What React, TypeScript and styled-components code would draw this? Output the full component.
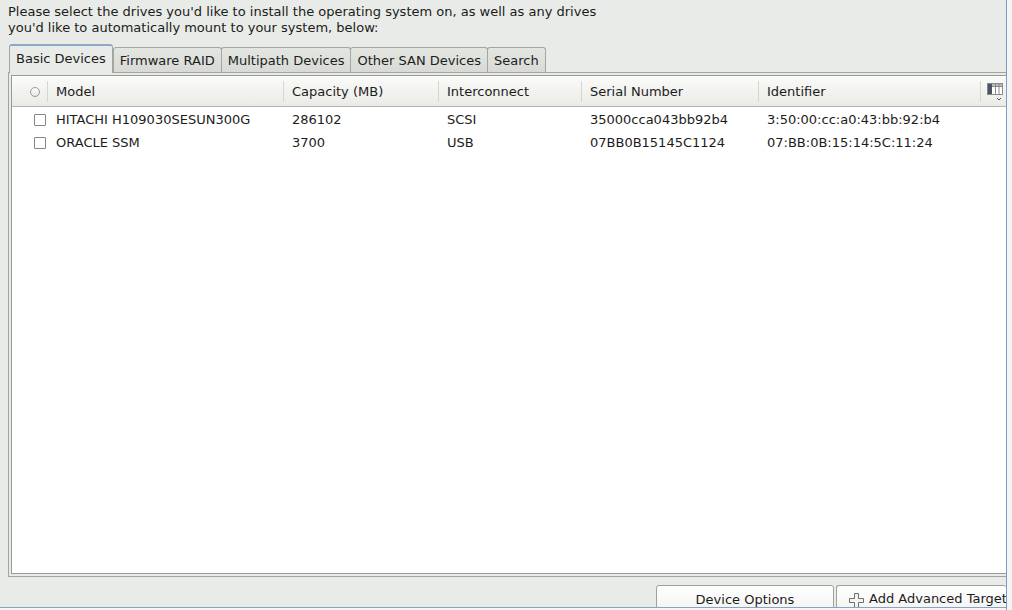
import styled, { createGlobalStyle } from "styled-components";

const GlobalStyle = createGlobalStyle`
  html, body {
    margin: 0;
    padding: 0;
    background: #f3f5f7;
  }
  * {
    box-sizing: border-box;
  }
`;

const columns = [
  { key: "model", label: "Model", width: 236 },
  { key: "capacity", label: "Capacity (MB)", width: 155 },
  { key: "interconnect", label: "Interconnect", width: 143 },
  { key: "serial", label: "Serial Number", width: 177 },
  { key: "identifier", label: "Identifier", width: 222 },
];

const devices = [
  {
    model: "HITACHI H109030SESUN300G",
    capacity: "286102",
    interconnect: "SCSI",
    serial: "35000cca043bb92b4",
    identifier: "3:50:00:cc:a0:43:bb:92:b4",
  },
  {
    model: "ORACLE SSM",
    capacity: "3700",
    interconnect: "USB",
    serial: "07BB0B15145C1124",
    identifier: "07:BB:0B:15:14:5C:11:24",
  },
];

const tabs = ["Basic Devices", "Firmware RAID", "Multipath Devices", "Other SAN Devices", "Search"];

const gridTemplate = `36px ${columns.map((c) => c.width + "px").join(" ")} 25px`;

const ColumnsIcon = () => (
  <svg width="18" height="22" viewBox="0 0 18 22">
    <rect x="1.5" y="2.5" width="15" height="11" fill="#fff" stroke="#8a8a8a" />
    <rect x="1.5" y="2.5" width="15" height="3" fill="#b8b8b8" stroke="#8a8a8a" />
    <rect x="2" y="3" width="4" height="10" fill="#4a5460" />
    <line x1="9.5" y1="3" x2="9.5" y2="13" stroke="#8a8a8a" />
    <line x1="13" y1="3" x2="13" y2="13" stroke="#8a8a8a" />
    <path d="M11 17 L13 19 L15 17" fill="none" stroke="#555" strokeWidth="1" />
  </svg>
);

const PlusIcon = () => (
  <svg width="17" height="17" viewBox="0 0 17 17">
    <path
      d="M6.5 1.5 H10.5 V6.5 H15.5 V10.5 H10.5 V15.5 H6.5 V10.5 H1.5 V6.5 H6.5 Z"
      fill="#f4f4f2"
      stroke="#6e6e6a"
    />
  </svg>
);

const App = () => {
  return (
    <>
      <GlobalStyle />
      <Screen>
        <Main>
          <Intro>
            Please select the drives you'd like to install the operating system on, as well as any drives
            <br />
            you'd like to automatically mount to your system, below:
          </Intro>

          <TabBar>
            {tabs.map((t, i) => (
              <Tab key={t} active={i === 0}>
                {t}
              </Tab>
            ))}
          </TabBar>

          <Panel>
            <TreeFrame>
              <HeaderRow>
                <HeaderCell first>
                  <RadioMark />
                </HeaderCell>
                {columns.map((c) => (
                  <HeaderCell key={c.key}>{c.label}</HeaderCell>
                ))}
                <HeaderCell icon>
                  <ColumnsIcon />
                </HeaderCell>
              </HeaderRow>
              <Body>
                {devices.map((d) => (
                  <Row key={d.serial}>
                    <Cell center>
                      <CheckBox />
                    </Cell>
                    <Cell>{d.model}</Cell>
                    <Cell>{d.capacity}</Cell>
                    <Cell>{d.interconnect}</Cell>
                    <Cell>{d.serial}</Cell>
                    <Cell>{d.identifier}</Cell>
                    <Cell />
                  </Row>
                ))}
              </Body>
            </TreeFrame>
          </Panel>

          <ButtonBar>
            <Button w={178}>Device Options</Button>
            <Button w={170} lead>
              <PlusIcon />
              Add Advanced Target
            </Button>
          </ButtonBar>
        </Main>
        <Edge />
      </Screen>
    </>
  );
};

export default App;

const Screen = styled.div`
  width: 1012px;
  height: 610px;
  display: flex;
  overflow: hidden;
  font-family: "DejaVu Sans", "Liberation Sans", sans-serif;
  font-size: 13px;
  color: #1c1c1c;
`;

const Main = styled.div`
  width: 1006px;
  height: 608px;
  flex-shrink: 0;
  background: #e8ebe7;
  border-bottom: 1px solid #8aa2c6;
  display: flex;
  flex-direction: column;
  overflow: hidden;

  & > * {
    flex-shrink: 0;
  }
`;

const Edge = styled.div`
  width: 6px;
  height: 610px;
  border-left: 1px solid #7f9bc4;
  background: #f3f5f7;
`;

const Intro = styled.div`
  padding: 4px 0 0 8px;
  line-height: 16px;
  height: 44px;
`;

const TabBar = styled.div`
  display: flex;
  align-items: flex-end;
  padding-left: 9px;
  height: 28px;
  position: relative;
  z-index: 1;
`;

const Tab = styled.div<{ active?: boolean }>`
  height: ${(p) => (p.active ? "29px" : "25px")};
  padding: 4px 6px 0 6px;
  margin-left: ${(p) => (p.active ? "0" : "-1px")};
  line-height: 18px;
  white-space: nowrap;
  border: 1px solid #a4a6a0;
  border-bottom: none;
  border-radius: 3px 3px 0 0;
  background: ${(p) => (p.active ? "#e8ebe7" : "linear-gradient(#e4e6e1, #d8dbd5)")};
  border-top: ${(p) => (p.active ? "2px solid #8ea7c9" : "1px solid #a4a6a0")};
  margin-bottom: ${(p) => (p.active ? "-1px" : "0")};
  position: relative;
  z-index: ${(p) => (p.active ? 2 : 1)};

  &:nth-child(2) {
    margin-left: 0;
  }
`;

const Panel = styled.div`
  height: 505px;
  margin-left: 8px;
  border: 1px solid #a2a49e;
  border-right: none;
  padding: 2px 0 2px 2px;
  background: #e8ebe7;
`;

const TreeFrame = styled.div`
  height: 100%;
  border: 1px solid #9a9a94;
  border-right: none;
  background: #fff;
  display: flex;
  flex-direction: column;
`;

const HeaderRow = styled.div`
  display: grid;
  grid-template-columns: ${gridTemplate};
  height: 31px;
  background: linear-gradient(#fafaf8, #eaeae6);
  border-bottom: 1px solid #b4b4ae;
  border-top: 1px solid #fff;
`;

const HeaderCell = styled.div<{ first?: boolean; icon?: boolean }>`
  display: flex;
  align-items: center;
  justify-content: ${(p) => (p.first ? "flex-end" : p.icon ? "center" : "flex-start")};
  padding: ${(p) => (p.first ? "0 7px 0 0" : p.icon ? "0 0 0 2px" : "0 0 0 8px")};
  border-right: ${(p) => (p.icon ? "none" : "1px solid #d6d6d0")};
  margin: 4px 0;
  white-space: nowrap;
  overflow: hidden;
`;

const RadioMark = styled.span`
  width: 10px;
  height: 10px;
  border-radius: 50%;
  border: 1px solid #9a9a96;
  background: linear-gradient(#fff, #e6e6e4);
`;

const Body = styled.div`
  flex: 1;
  padding-top: 1px;
`;

const Row = styled.div`
  display: grid;
  grid-template-columns: ${gridTemplate};
  height: 23px;
  align-items: center;
`;

const Cell = styled.div<{ center?: boolean }>`
  display: flex;
  justify-content: ${(p) => (p.center ? "flex-end" : "flex-start")};
  padding: ${(p) => (p.center ? "0 2px 0 0" : "0 0 0 8px")};
  white-space: nowrap;
`;

const CheckBox = styled.span`
  width: 12px;
  height: 12px;
  border: 1px solid #85857f;
  border-radius: 1px;
  background: #fff;
`;

const ButtonBar = styled.div`
  display: flex;
  justify-content: flex-end;
  gap: 2px;
  padding-top: 8px;
`;

const Button = styled.div<{ w: number; lead?: boolean }>`
  width: ${(p) => p.w}px;
  height: 32px;
  display: flex;
  align-items: flex-start;
  justify-content: ${(p) => (p.lead ? "flex-start" : "center")};
  gap: 4px;
  padding: ${(p) => (p.lead ? "5px 0 0 11px" : "6px 0 0 0")};
  border: 1px solid #a0a29c;
  border-right: ${(p) => (p.lead ? "none" : "1px solid #a0a29c")};
  border-radius: 3px;
  background: linear-gradient(#ffffff, #f1f1ef);
  white-space: nowrap;
  line-height: 16px;
  font-size: 13px;
  overflow: hidden;

  svg {
    flex-shrink: 0;
    margin-top: 1px;
  }
`;
